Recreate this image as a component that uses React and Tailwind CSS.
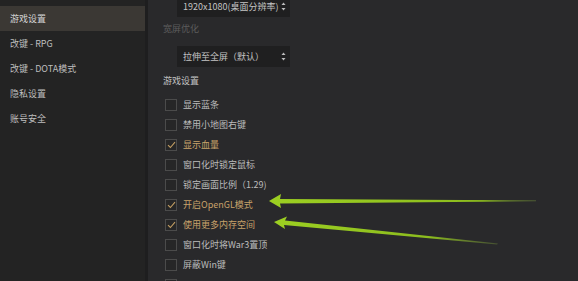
import React from 'react';

const menu = ['游戏设置', '改键 - RPG', '改键 - DOTA模式', '隐私设置', '账号安全'];

const options = [
  { label: '显示蓝条', checked: false },
  { label: '禁用小地图右键', checked: false },
  { label: '显示血量', checked: true },
  { label: '窗口化时锁定鼠标', checked: false },
  { label: '锁定画面比例（1.29)', checked: false },
  { label: '开启OpenGL模式', checked: true },
  { label: '使用更多内存空间', checked: true },
  { label: '窗口化时将War3置顶', checked: false },
  { label: '屏蔽Win键', checked: false },
  { label: '', checked: false },
];

const Select = ({ value, className }) => (
  <div className={`ml-[14px] w-[113px] h-[21px] bg-[#1f1f20] flex items-center justify-between pl-[6px] pr-[4px] text-[#c4c4c4] ${className}`}>
    <span>{value}</span>
    <svg width="5" height="9" viewBox="0 0 5 9">
      <path d="M2.5 0.5 L4.5 3 L0.5 3 Z" fill="#bdbdbd" />
      <path d="M2.5 8.5 L4.5 6 L0.5 6 Z" fill="#bdbdbd" />
    </svg>
  </div>
);

const CheckRow = ({ label, checked }) => (
  <div className="h-[20px] flex items-center gap-[6px]">
    <div className="ml-[2px] w-[12px] h-[12px] border border-[#4b4b4b] bg-[#262627] flex items-center justify-center">
      {checked && (
        <svg width="9" height="8" viewBox="0 0 9 8">
          <path d="M1 4.2 L3.4 6.5 L8 1.2" fill="none" stroke="#c29d62" strokeWidth="1.1" />
        </svg>
      )}
    </div>
    <span className={checked ? 'text-[#c8a26a]' : 'text-[#bcbcbc]'}>{label}</span>
  </div>
);

export default function App() {
  return (
    <div
      className="relative w-[578px] h-[281px] overflow-hidden flex text-[9px] leading-[14px]"
      style={{ fontFamily: '"Noto Sans CJK SC", "Noto Sans", sans-serif' }}
    >
      <div className="w-[145px] bg-[#232323] pt-[6px] flex flex-col">
        {menu.map((item, i) => (
          <div
            key={item}
            className={`h-[25px] shrink-0 flex items-center pl-[10px] ${i === 0 ? 'bg-[#3b3834] text-[#d4d4d4]' : 'text-[#bebebe]'}`}
          >
            {item}
          </div>
        ))}
      </div>
      <div className="w-[3px] bg-[#1e1e1f]" />
      <div className="flex-1 bg-[#29292b] pl-[15px]">
        <Select value="1920x1080(桌面分辨率)" className="mt-[-4px]" />
        <div className="mt-[5px] text-[#5c5c5c]">宽屏优化</div>
        <Select value="拉伸至全屏（默认）" className="mt-[10px]" />
        <div className="mt-[7px] text-[#c2c2c2]">游戏设置</div>
        <div className="mt-[7px]">
          {options.map((o, i) => (
            <CheckRow key={i} label={o.label} checked={o.checked} />
          ))}
        </div>
      </div>

      <svg className="absolute left-0 top-0 pointer-events-none" width="578" height="281" viewBox="0 0 578 281">
        <defs>
          <linearGradient id="g1" x1="270" y1="0" x2="536" y2="0" gradientUnits="userSpaceOnUse">
            <stop offset="0" stopColor="#9ccf22" />
            <stop offset="0.8" stopColor="#8cbc1e" />
            <stop offset="1" stopColor="#6f8a3a" stopOpacity="0.5" />
          </linearGradient>
          <linearGradient id="g2" x1="274" y1="222" x2="498" y2="244" gradientUnits="userSpaceOnUse">
            <stop offset="0" stopColor="#9ccf22" />
            <stop offset="0.7" stopColor="#8cbc1e" />
            <stop offset="1" stopColor="#6f8a3a" stopOpacity="0.4" />
          </linearGradient>
        </defs>
        <path d="M269 201 L281 194 L280 199 L536 200.3 L536 201.3 L280 203.5 L281 208 Z" fill="url(#g1)" />
        <path d="M274 222 L287 216.5 L285 220.5 L498 243.5 L497 244.5 L284 225 L285 229 Z" fill="url(#g2)" />
      </svg>
    </div>
  );
}
